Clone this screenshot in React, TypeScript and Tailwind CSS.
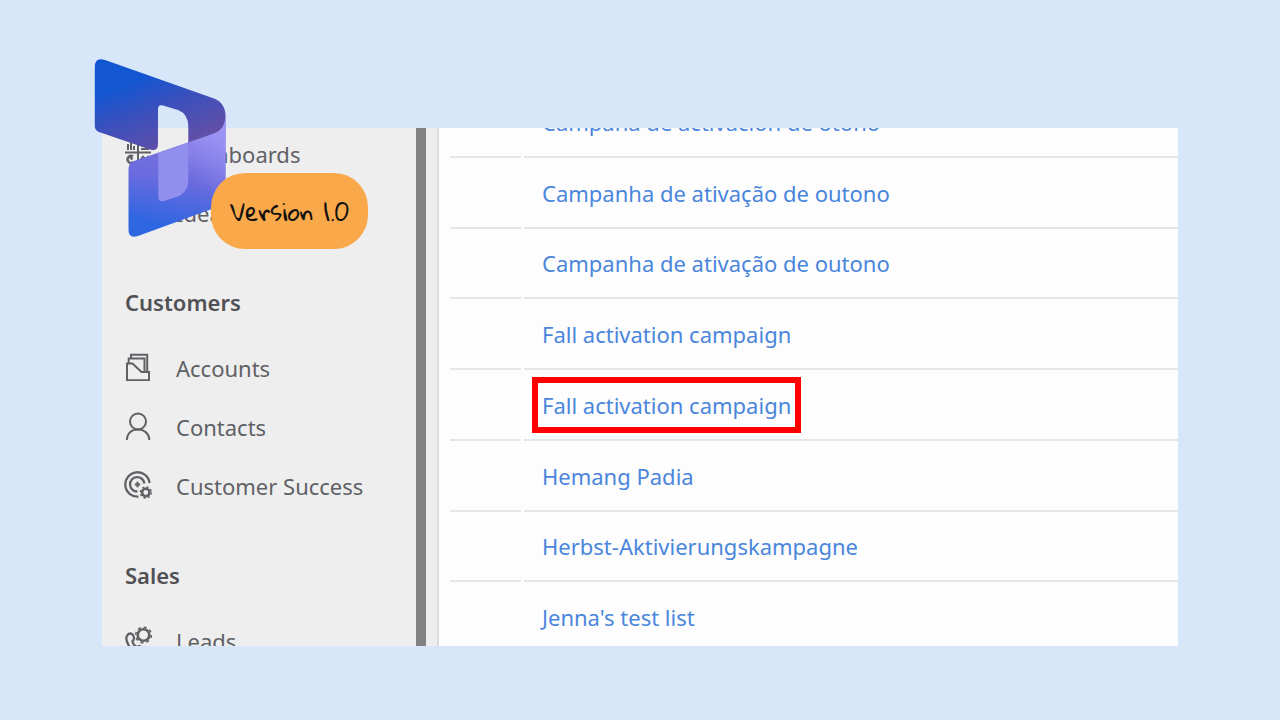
import type { ReactNode } from "react";

type NavItem = { label: string; icon: ReactNode };
type NavGroup = { title?: string; items: NavItem[] };

const iconProps = {
  viewBox: "0 0 28 28",
  fill: "none",
  stroke: "currentColor",
  strokeWidth: 2,
  className: "mb-1 h-7 w-7 shrink-0",
  "aria-hidden": true,
} as const;

function DashboardIcon() {
  return (
    <svg {...iconProps}>
      <path d="M1 13.500h26M14 1v25" />
      <path d="M4 11V5M7 11V2M10 11V7M17 3h8M17 6.500h8M17 10h8" />
      <path d="M9 17.500a3.500 3.500 0 1 0 .5 5.500M6 18l2.500 2.500M16 22l3-4 3 3 3-4" strokeWidth="2.400" />
    </svg>
  );
}

function IdeaIcon() {
  return (
    <svg {...iconProps}>
      <path d="M10 21v-3c-7-5-3-15 4-15s11 10 4 15v3zM11 25h6" />
    </svg>
  );
}

function AccountsIcon() {
  return (
    <svg {...iconProps}>
      <path d="M3 10.500h5.500l9 8.500h7.500v8.200H3z" />
      <path d="M4.700 10V5.500h15.800v13M7 5V1.800h16.200v17" />
    </svg>
  );
}

function ContactsIcon() {
  return (
    <svg {...iconProps}>
      <circle cx="14" cy="9.500" r="8" />
      <path d="M2.800 28C3.200 21 8 17.500 14 17.500s11 3.500 11.400 10.500" />
    </svg>
  );
}

function CustomerSuccessIcon() {
  return (
    <svg {...iconProps}>
      <path d="M25.600 12A12.200 12.200 0 1 0 14.500 25.600" strokeWidth="2.300" />
      <path d="M20.400 12.500a7.200 7.200 0 1 0-7 8" strokeWidth="2.300" />
      <path d="M13.500 10.800v5.400M10.800 13.500h5.400" strokeWidth="2.200" />
      <circle cx="21.800" cy="21.500" r="3.700" strokeWidth="2.600" />
      <circle cx="21.800" cy="21.500" r="5.500" strokeWidth="1.400" strokeDasharray="2.160 2.160" />
    </svg>
  );
}

function LeadsIcon() {
  return (
    <svg {...iconProps}>
      <circle cx="19.500" cy="9" r="5.800" strokeWidth="2.600" />
      <circle cx="19.500" cy="9" r="7.800" strokeWidth="1.600" strokeDasharray="3.060 3.065" />
      <path
        d="M9 9c-1.500-2-4-2-5.500 0-4 5 4 17 10 18 3 .5 7-1 6-4l-4-3-3 1c-2-1-4-4-4-6 1.500-1 2-3.500.5-6z"
        strokeWidth="2.300"
      />
    </svg>
  );
}

const navGroups: NavGroup[] = [
  {
    items: [
      { label: "Dashboards", icon: <DashboardIcon /> },
      { label: "Ideas", icon: <IdeaIcon /> },
    ],
  },
  {
    title: "Customers",
    items: [
      { label: "Accounts", icon: <AccountsIcon /> },
      { label: "Contacts", icon: <ContactsIcon /> },
      { label: "Customer Success", icon: <CustomerSuccessIcon /> },
    ],
  },
  { title: "Sales", items: [{ label: "Leads", icon: <LeadsIcon /> }] },
];

const campaigns = [
  { name: "Campaña de activación de otoño" },
  { name: "Campanha de ativação de outono" },
  { name: "Campanha de ativação de outono" },
  { name: "Fall activation campaign" },
  { name: "Fall activation campaign", highlighted: true },
  { name: "Hemang Padia" },
  { name: "Herbst-Aktivierungskampagne" },
  { name: "Jenna's test list" },
];

function Sidebar() {
  return (
    <nav className="w-[314px] shrink-0 bg-[#eeeeee] text-[22px] text-[#606165]">
      <div className="-mt-[3px]">
        {navGroups.map((group, index) => (
          <section key={index}>
            {group.title && (
              <h2 className="mt-[41px] mb-[19px] pl-[23px] leading-9 font-semibold text-[#505154]">{group.title}</h2>
            )}
            <ul>
              {group.items.map((item) => (
                <li key={item.label}>
                  <a href="#" className="flex h-[59px] items-center gap-6 pl-[22px] whitespace-nowrap">
                    {item.icon}
                    {item.label}
                  </a>
                </li>
              ))}
            </ul>
          </section>
        ))}
      </div>
    </nav>
  );
}

function CampaignList() {
  return (
    <main className="min-w-0 flex-1 border-l-2 border-[#dcdcdc] bg-[#fdfdfd] pl-[11px]">
      <ul className="-mt-[41px] grid h-[566px] grid-rows-8">
        {campaigns.map((campaign, index) => (
          <li key={index} className="flex gap-[3px]">
            <div className="w-[71px] border-b-2 border-[#e6e6e6]" />
            <div className="flex flex-1 items-center border-b-2 border-[#e6e6e6] pt-px pl-[18px]">
              <a href="#" className="relative text-[22px] leading-9 whitespace-nowrap text-[#4a86dc]">
                {campaign.name}
                {campaign.highlighted && (
                  <span className="absolute -inset-x-2.5 -inset-y-[10px] border-6 border-[#ff0000]" />
                )}
              </a>
            </div>
          </li>
        ))}
      </ul>
    </main>
  );
}

function Logo() {
  return (
    <svg
      viewBox="94 58 133 180"
      className="absolute -top-[70px] -left-2 h-[180px] w-[133px]"
      role="img"
      aria-label="Dynamics 365"
    >
      <defs>
        <linearGradient id="ribbon-top" x1="120" y1="75" x2="155" y2="165" gradientUnits="userSpaceOnUse">
          <stop offset="0.1" stopColor="#1256d2" />
          <stop offset="0.450" stopColor="#3a50bd" />
          <stop offset="1" stopColor="#6a4fa2" />
        </linearGradient>
        <linearGradient id="ribbon-bottom" x1="185" y1="135" x2="168" y2="226" gradientUnits="userSpaceOnUse">
          <stop offset="0" stopColor="#7d74de" />
          <stop offset="0.500" stopColor="#6a6bde" />
          <stop offset="1" stopColor="#2f66e2" />
        </linearGradient>
        <linearGradient id="ribbon-edge" x1="200" y1="185" x2="228" y2="140" gradientUnits="userSpaceOnUse">
          <stop offset="0" stopColor="#9b93f4" stopOpacity="0" />
          <stop offset="1" stopColor="#9b93f4" />
        </linearGradient>
      </defs>
      <path
        fill="url(#ribbon-top)"
        d="M94.800 67Q94.800 56.500 105 60L214 98.500Q225.600 103 225.600 117Q225 129 215 134L188.300 143.500V126Q188 114 178 110L163 105.500Q158 104 158 109V144Q158 152 150 149.500L99 132Q94.800 130.500 94.800 126Z"
      />
      <path
        fill="url(#ribbon-bottom)"
        d="M128.500 169Q128.500 163 134 161L214 133.500Q225.600 129 225.600 115V204L138 236Q128.500 239 128.500 230Z"
      />
      <path fill="url(#ribbon-edge)" d="M188.300 142.500L214 133.500Q225.600 129 225.600 115V204L188.300 217Z" />
      <path fill="#918fee" d="M158.300 153L188.300 142.500V181Q188 192 178 196.500L164 201Q158.300 202 158.300 197Z" />
    </svg>
  );
}

export default function App() {
  return (
    <div className="flex h-screen flex-col bg-[#d7e6f8] px-[102px] pt-32 pb-[74px] font-['Noto_Sans','Open_Sans',sans-serif]">
      <div className="relative flex min-h-0 flex-1 flex-col">
        <div className="flex min-h-0 flex-1 overflow-hidden">
          <Sidebar />
          <div className="w-2.5 shrink-0 bg-[#828282]" />
          <div className="w-[11px] shrink-0 bg-[#eeeeee]" />
          <CampaignList />
        </div>
        <Logo />
        <div className="absolute top-[45px] left-[109px] flex h-[76px] w-[157px] items-center justify-center rounded-[34px] bg-[#faa94a] font-['Gloria_Hallelujah','Lato',sans-serif] text-2xl text-[#111111]">
          Version 1.0
        </div>
      </div>
    </div>
  );
}
